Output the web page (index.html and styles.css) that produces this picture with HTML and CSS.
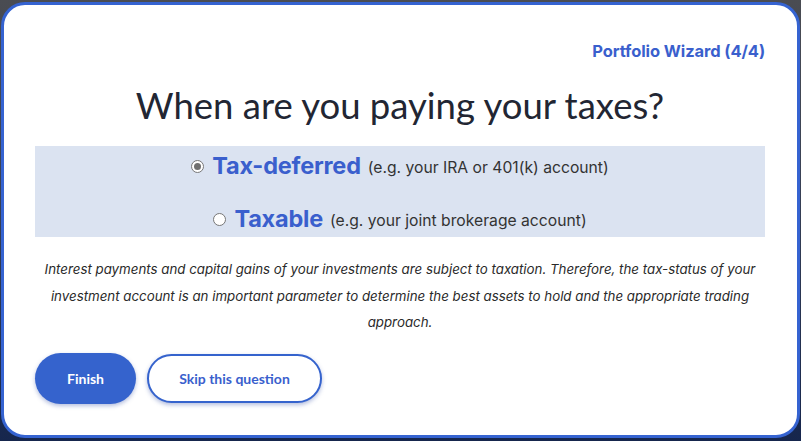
FILE: index.html
```html
<!DOCTYPE html>
<html>
<head>
<meta charset="utf-8">
<link rel="stylesheet" href="styles.css">
</head>
<body>
<div class="modal">
  <div class="step">Portfolio Wizard (4/4)</div>
  <h1 class="question">When are you paying your taxes?</h1>
  <div class="options">
    <label class="option opt1">
      <span class="radio checked"></span>
      <span class="opt-name">Tax-deferred</span>
      <span class="opt-hint">(e.g. your IRA or 401(k) account)</span>
    </label>
    <label class="option opt2">
      <span class="radio"></span>
      <span class="opt-name">Taxable</span>
      <span class="opt-hint">(e.g. your joint brokerage account)</span>
    </label>
  </div>
  <p class="explain">Interest payments and capital gains of your investments are subject to taxation. Therefore, the tax-status of your investment account is an important parameter to determine the best assets to hold and the appropriate trading approach.</p>
  <div class="actions">
    <button class="btn primary">Finish</button>
    <button class="btn secondary">Skip this question</button>
  </div>
</div>
</body>
</html>
```
FILE: styles.css
```css
html, body {
  margin: 0;
  padding: 0;
  width: 801px;
  height: 441px;
  overflow: hidden;
}
body {
  background: linear-gradient(180deg, #4a4c52 0%, #3a4256 40%, #16264d 100%);
  font-family: Inter, "Liberation Sans", sans-serif;
}
.modal {
  box-sizing: border-box;
  margin: 2px 0 0 1px;
  width: 799px;
  height: 436px;
  background: #fff;
  border: 3px solid #3563d1;
  border-radius: 24px;
  padding: 36px 32px 0 31px;
  display: flex;
  flex-direction: column;
}
.step {
  text-align: right;
  color: #3a5fcd;
  font-weight: 700;
  font-size: 16.5px;
  line-height: 20px;
  letter-spacing: -0.1px;
}
.question {
  margin: 19px 0 0 0;
  text-align: center;
  font-family: Lato, "Liberation Sans", sans-serif;
  font-weight: 400;
  font-size: 36.5px;
  line-height: 50px;
  color: #222633;
  letter-spacing: 0;
}
.options {
  margin-top: 16px;
  background: #dbe3f1;
  height: 91px;
  display: flex;
  flex-direction: column;
  align-items: center;
}
.option {
  display: flex;
  align-items: center;
  gap: 0;
  height: 38px;
}
.opt1 { margin-top: 1px; }
.opt2 { margin-top: 16px; }
.radio {
  box-sizing: border-box;
  width: 13px;
  height: 13px;
  border-radius: 50%;
  border: 1px solid #777;
  background: #fff;
  margin-right: 8px;
  margin-top: 1px;
  position: relative;
}
.radio.checked::after {
  content: "";
  position: absolute;
  left: 2px;
  top: 2px;
  width: 7px;
  height: 7px;
  border-radius: 50%;
  background: #707070;
}
.opt-name {
  color: #3a5fcd;
  font-weight: 700;
  font-size: 23.5px;
  margin-right: 7px;
  letter-spacing: -0.2px;
}
.opt-hint {
  color: #333;
  font-size: 15.7px;
  margin-top: 3px;
}
.explain {
  margin: 19px 0 0 0;
  text-align: center;
  font-style: italic;
  font-size: 13.3px;
  line-height: 26.5px;
  color: #2a2a2a;
  padding: 0;
}
.actions {
  margin-top: 17px;
  display: flex;
  gap: 11px;
  align-items: center;
}
.btn {
  font-family: Lato, "Liberation Sans", sans-serif;
  font-weight: 700;
  font-size: 14px;
  border-radius: 26px;
  cursor: pointer;
  box-shadow: 0 2px 4px rgba(40, 70, 160, 0.35);
}
.primary {
  width: 101px;
  height: 51px;
  background: #3563cd;
  color: #fff;
  border: none;
}
.secondary {
  width: 175px;
  height: 49px;
  background: #fff;
  color: #3a5fcd;
  border: 2px solid #3563cd;
}
```
